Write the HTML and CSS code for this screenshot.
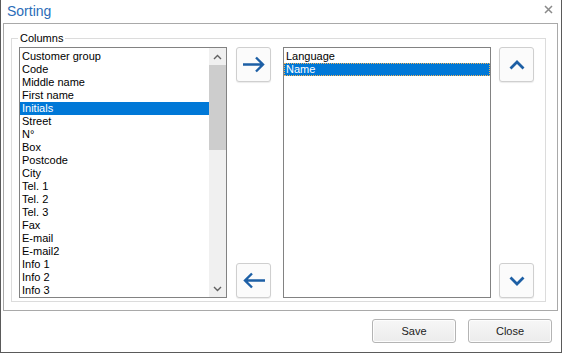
FILE: index.html
```html
<!DOCTYPE html>
<html lang="en">
<head>
    <meta charset="utf-8">
    <title>Sorting</title>
    <link rel="stylesheet" href="styles.css">
</head>
<body>
    <div class="window">
        <div class="titlebar">
            <span class="title">Sorting</span>
            <svg class="close-x" width="9" height="9" viewBox="0 0 9 9">
                <path d="M1 1 L8 8 M8 1 L1 8" stroke="#8a8a8a" stroke-width="1.5" fill="none"/>
            </svg>
        </div>

        <div class="panel">
            <div class="group">
                <span class="group-label">Columns</span>
                <div class="columns">
                    <div class="list">
                        <div class="items">
                            <div class="item">Customer group</div>
                            <div class="item">Code</div>
                            <div class="item">Middle name</div>
                            <div class="item">First name</div>
                            <div class="item selected">Initials</div>
                            <div class="item">Street</div>
                            <div class="item">N°</div>
                            <div class="item">Box</div>
                            <div class="item">Postcode</div>
                            <div class="item">City</div>
                            <div class="item">Tel. 1</div>
                            <div class="item">Tel. 2</div>
                            <div class="item">Tel. 3</div>
                            <div class="item">Fax</div>
                            <div class="item">E-mail</div>
                            <div class="item">E-mail2</div>
                            <div class="item">Info 1</div>
                            <div class="item">Info 2</div>
                            <div class="item">Info 3</div>
                        </div>
                        <div class="scrollbar">
                            <div class="sb-btn">
                                <svg width="9" height="6" viewBox="0 0 9 6"><path d="M1 5 L4.5 1.5 L8 5" stroke="#606060" stroke-width="1.4" fill="none"/></svg>
                            </div>
                            <div class="sb-thumb"></div>
                            <div class="sb-track"></div>
                            <div class="sb-btn">
                                <svg width="9" height="6" viewBox="0 0 9 6"><path d="M1 1 L4.5 4.5 L8 1" stroke="#606060" stroke-width="1.4" fill="none"/></svg>
                            </div>
                        </div>
                    </div>

                    <div class="tool-col">
                        <button class="tool-btn">
                            <svg width="24" height="17" viewBox="0 0 24 17"><path d="M1 8.5 H21 M14 1.5 L21 8.5 L14 15.5" stroke="#1d5fa5" stroke-width="2.4" fill="none"/></svg>
                        </button>
                        <button class="tool-btn">
                            <svg width="24" height="17" viewBox="0 0 24 17"><path d="M23 8.5 H3 M10 1.5 L3 8.5 L10 15.5" stroke="#1d5fa5" stroke-width="2.4" fill="none"/></svg>
                        </button>
                    </div>

                    <div class="list list-right">
                        <div class="items">
                            <div class="item">Language</div>
                            <div class="item selected focused">Name</div>
                        </div>
                    </div>

                    <div class="tool-col">
                        <button class="tool-btn">
                            <svg width="16" height="10" viewBox="0 0 16 10"><path d="M1.5 8.5 L8 2 L14.5 8.5" stroke="#1d5fa5" stroke-width="2.8" fill="none"/></svg>
                        </button>
                        <button class="tool-btn">
                            <svg width="16" height="10" viewBox="0 0 16 10"><path d="M1.5 1.5 L8 8 L14.5 1.5" stroke="#1d5fa5" stroke-width="2.8" fill="none"/></svg>
                        </button>
                    </div>
                </div>
            </div>
        </div>

        <div class="footer">
            <button class="btn">Save</button>
            <button class="btn">Close</button>
        </div>
    </div>
</body>
</html>
```

FILE: styles.css
```css
* {
    box-sizing: border-box;
}
body {
    margin: 0;
    font-family: "Liberation Sans", Arial, sans-serif;
    font-size: 11px;
    background: #fff;
}
.window {
    width: 562px;
    height: 353px;
    background: #fff;
    border: 1px solid #5a5a5a;
    border-top: none;
}
.titlebar {
    height: 23px;
    display: flex;
    align-items: center;
    justify-content: space-between;
    padding: 0 8px 0 6px;
}
.title {
    font-size: 14px;
    color: #2a6db8;
    line-height: 21px;
    margin-bottom: 1px;
}
.close-x {
    margin-bottom: 4px;
}
.panel {
    width: 555px;
    height: 288px;
    margin-left: 2px;
    border: 1px solid #a9a9a9;
    padding: 14px 0 0 7px;
}
.group {
    width: 535px;
    height: 264px;
    border: 1px solid #dcdcdc;
    padding: 0 10px 3px 7px;
}
.group-label {
    display: block;
    width: fit-content;
    margin: -7px 0 2px -1px;
    padding: 0 2px;
    line-height: 13px;
    background: #fff;
    color: #000;
}
.columns {
    display: flex;
    height: 251px;
}
.list {
    width: 208px;
    height: 251px;
    border: 1px solid #828282;
    background: #fff;
    display: flex;
}
.items {
    flex: 1;
    padding-top: 2px;
    overflow: hidden;
}
.item {
    height: 13px;
    line-height: 13px;
    padding-left: 2px;
    white-space: nowrap;
    color: #000;
}
.item.selected {
    background: #0078d7;
    color: #fff;
}
.item.focused {
    outline: 1px dotted #f3b35a;
    outline-offset: -1px;
}
.scrollbar {
    width: 17px;
    background: #f0f0f0;
    display: flex;
    flex-direction: column;
}
.sb-btn {
    height: 17px;
    display: flex;
    align-items: center;
    justify-content: center;
}
.sb-thumb {
    height: 85px;
    background: #cdcdcd;
}
.sb-track {
    flex: 1;
}
.tool-col {
    width: 35px;
    display: flex;
    flex-direction: column;
    justify-content: space-between;
    margin: 0 12px 0 9px;
}
.tool-col:last-child {
    margin: 0 0 0 8px;
}
.tool-btn {
    width: 35px;
    height: 35px;
    padding: 0;
    border: 1px solid #cfcfcf;
    border-radius: 3px;
    background: #fbfbfb;
    box-shadow: 0 1px 1px rgba(0, 0, 0, 0.08);
    display: flex;
    align-items: center;
    justify-content: center;
}
.footer {
    display: flex;
    justify-content: flex-end;
    gap: 12px;
    padding: 8px 9px 0 0;
}
.btn {
    width: 84px;
    height: 24px;
    padding: 0;
    font-family: "Liberation Sans", Arial, sans-serif;
    font-size: 11px;
    color: #222;
    border: 1px solid #b4b4b4;
    border-radius: 3px;
    background: linear-gradient(#f7f7f7, #ececec);
    box-shadow: inset 0 0 0 1px #fdfdfd;
}
```
